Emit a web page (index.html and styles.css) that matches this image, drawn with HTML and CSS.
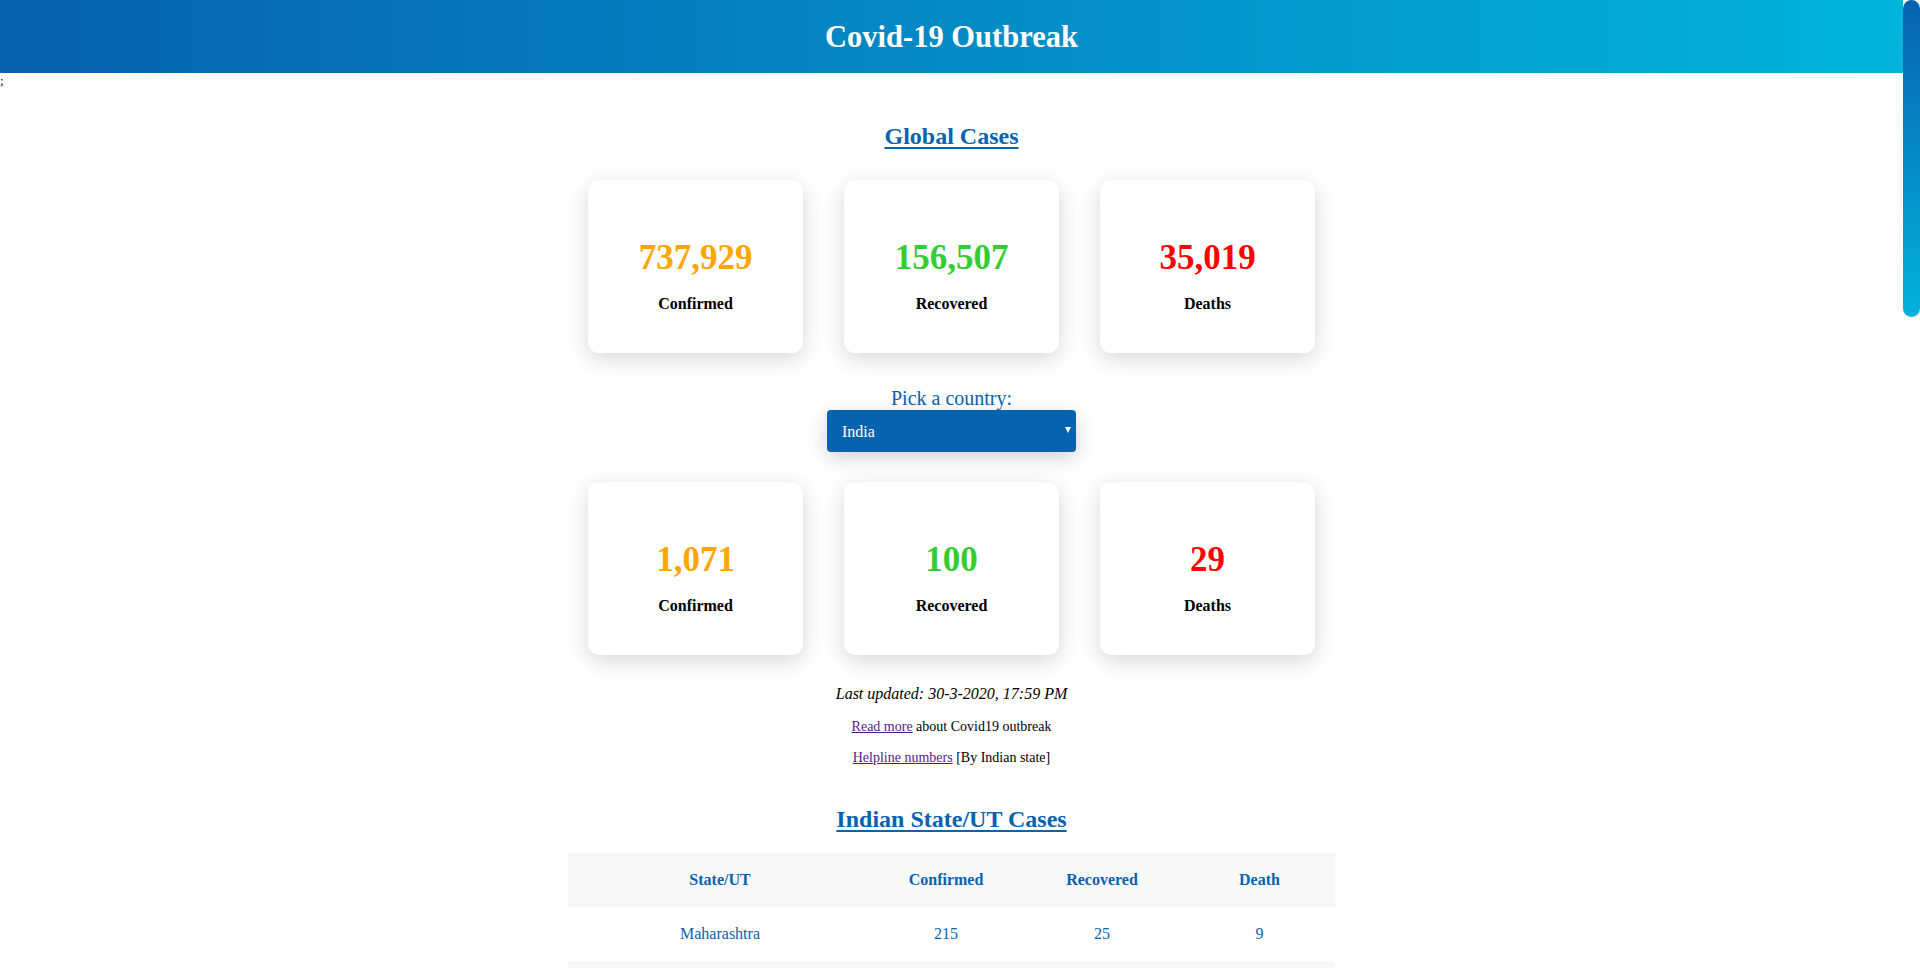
FILE: index.html
```html
<!DOCTYPE html>
<html lang="en">
<head>
<meta charset="utf-8">
<title>Covid-19 Outbreak</title>
<link rel="stylesheet" href="styles.css">
</head>
<body>
<header class="topbar"><h1 class="title">Covid-19 Outbreak</h1></header>
<div class="stray">;</div>
<main class="main">
  <h2 class="section-title first">Global Cases</h2>
  <div class="cards">
    <div class="card"><div class="num confirmed">737,929</div><div class="label">Confirmed</div></div>
    <div class="card"><div class="num recovered">156,507</div><div class="label">Recovered</div></div>
    <div class="card"><div class="num deaths">35,019</div><div class="label">Deaths</div></div>
  </div>
  <div class="picker">
    <label class="pick-label" for="country">Pick a country:</label>
    <div class="select-wrap">
      <select id="country" class="country-select"><option>India</option></select>
    </div>
  </div>
  <div class="cards second">
    <div class="card"><div class="num confirmed">1,071</div><div class="label">Confirmed</div></div>
    <div class="card"><div class="num recovered">100</div><div class="label">Recovered</div></div>
    <div class="card"><div class="num deaths">29</div><div class="label">Deaths</div></div>
  </div>
  <p class="updated">Last updated: 30-3-2020, 17:59 PM</p>
  <p class="note"><a class="link" href="#">Read more</a> about Covid19 outbreak</p>
  <p class="note"><a class="link" href="#">Helpline numbers</a> [By Indian state]</p>
  <h2 class="section-title second-title">Indian State/UT Cases</h2>
  <table class="states">
    <thead>
      <tr><th class="c1">State/UT</th><th class="c2">Confirmed</th><th class="c3">Recovered</th><th class="c4">Death</th></tr>
    </thead>
    <tbody>
      <tr><td>Maharashtra</td><td>215</td><td>25</td><td>9</td></tr>
      <tr><td>Kerala</td><td>202</td><td>19</td><td>1</td></tr>
      <tr><td>Delhi</td><td>87</td><td>6</td><td>2</td></tr>
      <tr><td>Karnataka</td><td>83</td><td>5</td><td>3</td></tr>
      <tr><td>Uttar Pradesh</td><td>82</td><td>11</td><td>0</td></tr>
      <tr><td>Telangana</td><td>70</td><td>1</td><td>1</td></tr>
      <tr><td>Gujarat</td><td>69</td><td>1</td><td>6</td></tr>
      <tr><td>Tamil Nadu</td><td>67</td><td>4</td><td>1</td></tr>
      <tr><td>Rajasthan</td><td>59</td><td>3</td><td>0</td></tr>
      <tr><td>Madhya Pradesh</td><td>47</td><td>0</td><td>3</td></tr>
      <tr><td>Jammu and Kashmir</td><td>45</td><td>1</td><td>2</td></tr>
      <tr><td>Punjab</td><td>38</td><td>1</td><td>1</td></tr>
      <tr><td>Haryana</td><td>36</td><td>18</td><td>0</td></tr>
      <tr><td>Andhra Pradesh</td><td>23</td><td>1</td><td>0</td></tr>
      <tr><td>West Bengal</td><td>22</td><td>0</td><td>2</td></tr>
      <tr><td>Bihar</td><td>15</td><td>0</td><td>1</td></tr>
      <tr><td>Ladakh</td><td>13</td><td>3</td><td>0</td></tr>
      <tr><td>Andaman and Nicobar Islands</td><td>9</td><td>0</td><td>0</td></tr>
      <tr><td>Chandigarh</td><td>8</td><td>0</td><td>0</td></tr>
      <tr><td>Chhattisgarh</td><td>7</td><td>0</td><td>0</td></tr>
      <tr><td>Uttarakhand</td><td>7</td><td>2</td><td>0</td></tr>
      <tr><td>Goa</td><td>5</td><td>0</td><td>0</td></tr>
      <tr><td>Himachal Pradesh</td><td>3</td><td>0</td><td>1</td></tr>
      <tr><td>Odisha</td><td>3</td><td>0</td><td>0</td></tr>
      <tr><td>Manipur</td><td>1</td><td>0</td><td>0</td></tr>
      <tr><td>Mizoram</td><td>1</td><td>0</td><td>0</td></tr>
      <tr><td>Puducherry</td><td>1</td><td>0</td><td>0</td></tr>
    </tbody>
  </table>
</main>
<div class="scrollbar" aria-hidden="true"><div class="scroll-thumb"></div></div>
</body>
</html>
```
FILE: styles.css
```css
html { background: #fff; }

body {
  margin: 0 17px 0 0;
  font-family: "Liberation Serif", "Times New Roman", serif;
  color: #000;
}

.scrollbar {
  position: fixed;
  top: 0;
  right: 0;
  width: 17px;
  height: 100vh;
  background: #fff;
}
.scroll-thumb {
  width: 17px;
  height: 317px;
  border-radius: 9px;
  background: linear-gradient(180deg, #0762b0 0%, #02b3d9 100%);
}

.topbar {
  height: 73px;
  background: linear-gradient(90deg, #0760ae 0%, #02b4da 100%);
  display: flex;
  align-items: center;
  justify-content: center;
}

.title {
  margin: 0;
  color: #fff;
  font-size: 30.5px;
  font-weight: bold;
  line-height: 36px;
}

.stray {
  font-size: 13px;
  line-height: 15px;
  height: 15px;
}

.main {
  display: flex;
  flex-direction: column;
  align-items: center;
  padding-bottom: 591px;
}

.section-title {
  margin: 0;
  font-size: 24px;
  line-height: 30px;
  font-weight: bold;
  color: #0762b0;
  text-decoration: underline;
  text-underline-offset: 3px;
}
.section-title.first { margin-top: 33px; }
.section-title.second-title { margin-top: 38px; }

.cards {
  display: flex;
  gap: 41px;
  margin-top: 29px;
}
.cards.second { margin-top: 30px; }

.card {
  width: 215px;
  height: 173px;
  box-sizing: border-box;
  padding-top: 58px;
  background: #fff;
  border-radius: 11px;
  box-shadow: 0 6px 22px rgba(0, 0, 0, 0.16);
  text-align: center;
}

.num {
  font-size: 35px;
  line-height: 40px;
  font-weight: bold;
}
.num.confirmed { color: #ffa500; }
.num.recovered { color: #32cd32; }
.num.deaths { color: #ff0000; }

.label {
  margin-top: 16px;
  font-size: 16px;
  line-height: 20px;
  font-weight: bold;
}

.picker {
  margin-top: 33px;
  display: flex;
  flex-direction: column;
  align-items: center;
}

.pick-label {
  font-size: 20px;
  line-height: 24px;
  color: #0762b0;
}

.select-wrap {
  position: relative;
  width: 249px;
  height: 42px;
  border-radius: 4px;
  box-shadow: 0 6px 20px rgba(0, 0, 0, 0.18);
}
.select-wrap::after {
  content: "";
  position: absolute;
  right: 5px;
  top: 17px;
  border-left: 3.5px solid transparent;
  border-right: 3.5px solid transparent;
  border-top: 6px solid #fff;
  pointer-events: none;
}

.country-select {
  -webkit-appearance: none;
  appearance: none;
  width: 100%;
  height: 100%;
  border: none;
  border-radius: 4px;
  background: #0762b0;
  color: #fff;
  font-family: "Liberation Serif", "Times New Roman", serif;
  font-size: 16px;
  padding: 0 0 0 15px;
  outline: none;
}

.updated {
  margin: 29px 0 0;
  font-size: 16px;
  line-height: 20px;
  font-style: italic;
}

.note {
  margin: 14px 0 0;
  font-size: 14px;
  line-height: 17px;
}

.link { color: #551a8b; }

.states {
  margin-top: 19px;
  width: 767px;
  border-collapse: collapse;
  color: #0762b0;
  font-size: 16px;
}
.states th, .states td {
  height: 54px;
  padding: 0;
  text-align: center;
}
.states th { font-weight: bold; }
.states thead tr { background: #f8f8f8; }
.states tbody tr:nth-child(even) { background: #f8f8f8; }
.states .c1 { width: 304px; }
.states .c2 { width: 148px; }
.states .c3 { width: 164px; }
.states .c4 { width: 151px; }
```
